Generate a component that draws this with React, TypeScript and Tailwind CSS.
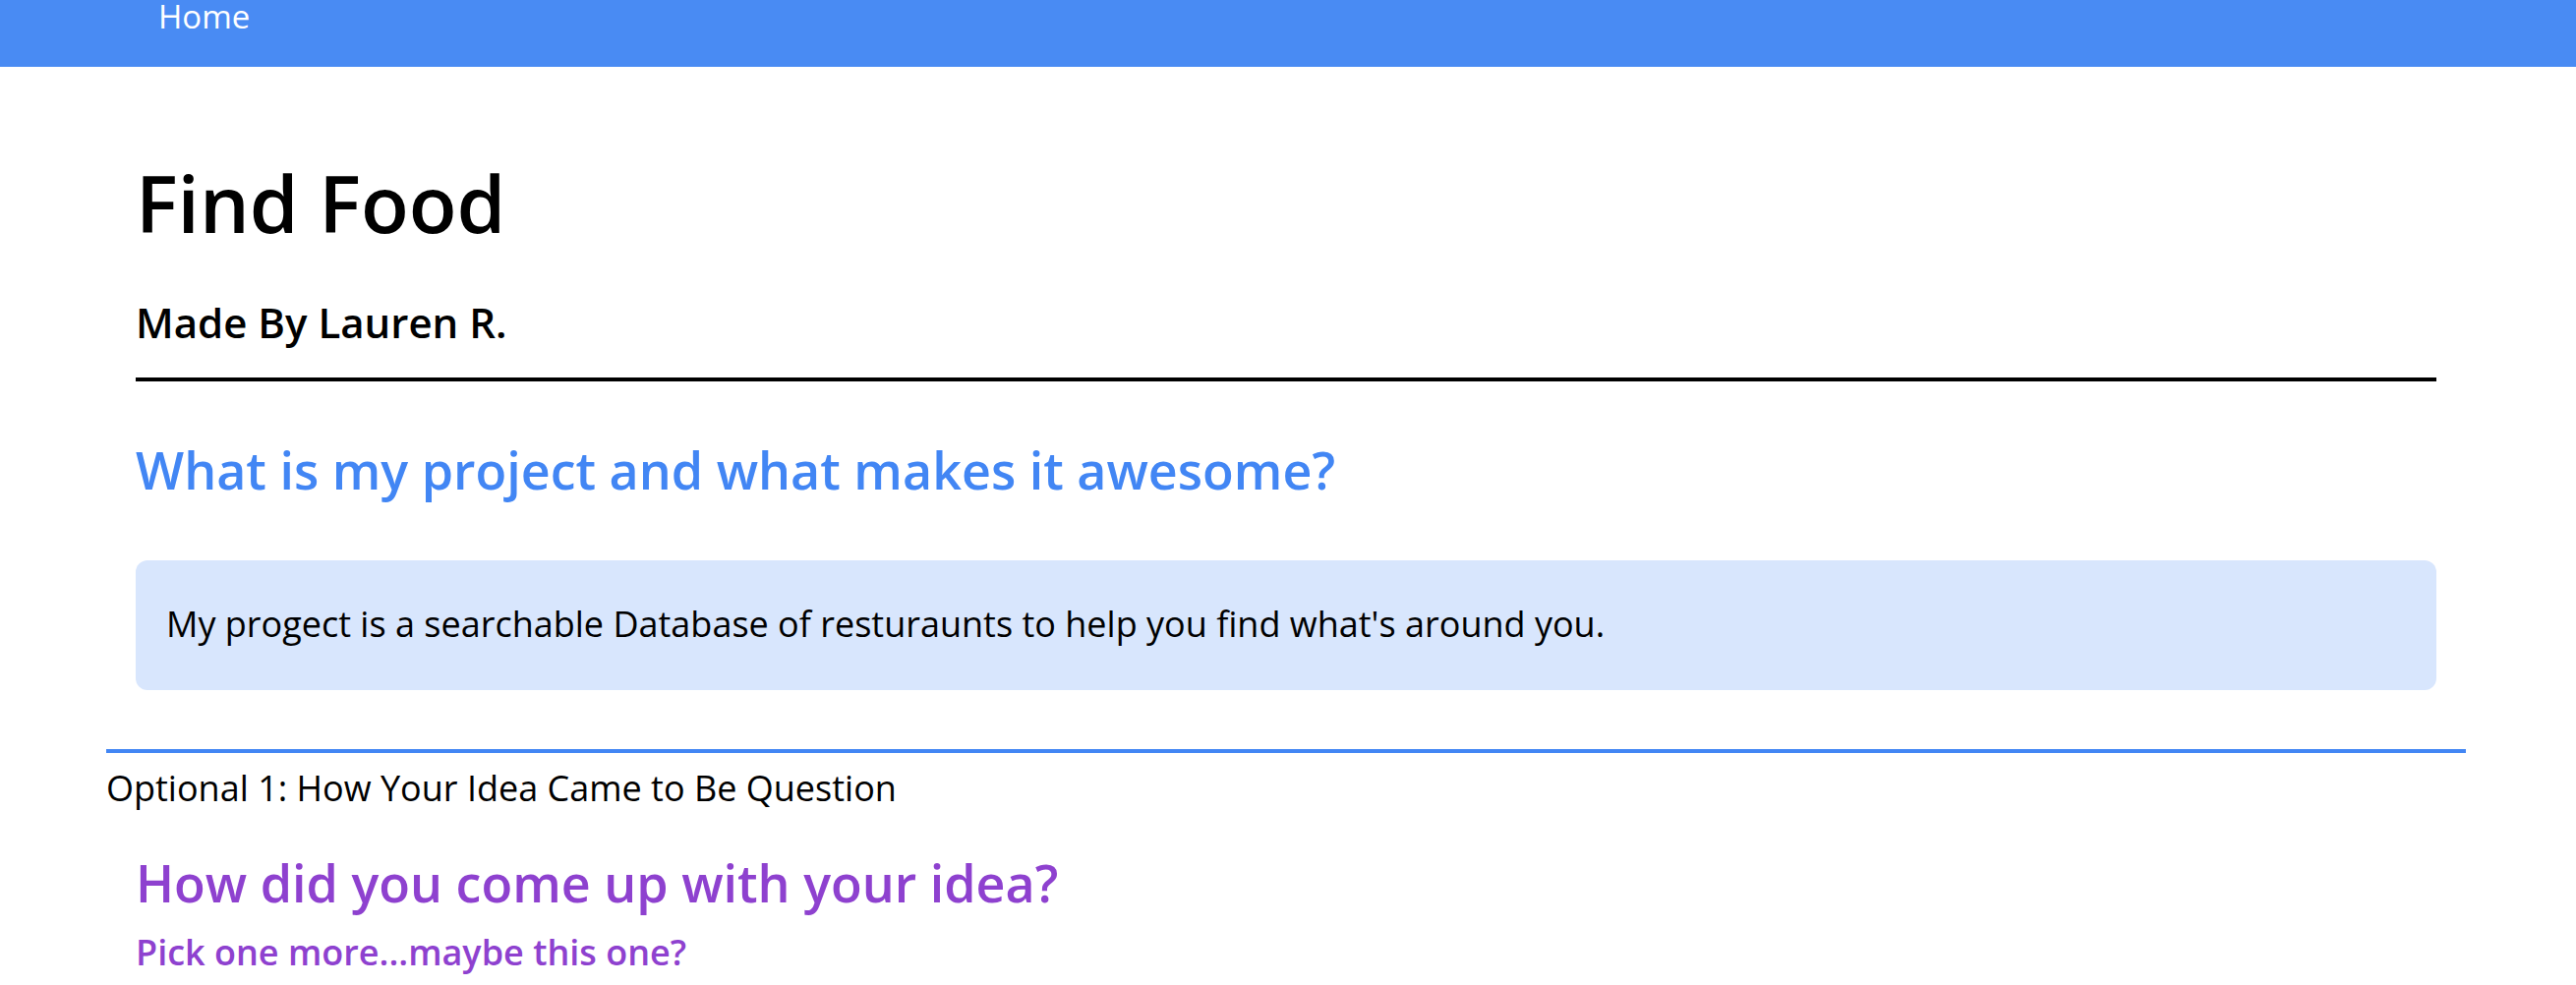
import React from 'react';

// Simple project showcase page
const Nav = () => (
  <nav className="h-[68px] bg-[#498bf3] pl-[161px]">
    <a className="block text-[33px] leading-none text-white w-fit">Home</a>
  </nav>
);

export default function App() {
  return (
    <div className="min-h-screen bg-white text-black font-['Open_Sans',sans-serif]">
      <Nav />
      <main className="ml-[108px] w-[2400px]">
        <section className="px-[30px]">
          <h1 className="mt-[98px] text-[80px] leading-none font-semibold">Find Food</h1>
          <h3 className="mt-[61px] text-[42px] leading-none font-semibold">Made By Lauren R.</h3>
          <hr className="mt-[35px] h-[4px] border-0 bg-black" />
          <h2 className="mt-[64px] text-[52px] leading-none font-semibold text-[#4286f4]">
            What is my project and what makes it awesome?
          </h2>
          <div className="mt-[66px] rounded-[12px] bg-[#d8e6fd] pl-[31px] pt-[47px] pb-[49px]">
            <p className="text-[36px] leading-none">
              My progect is a searchable Database of resturaunts to help you find what's around you.
            </p>
          </div>
        </section>
        <hr className="mt-[60px] h-[4px] border-0 bg-[#4286f4]" />
        <p className="mt-[18px] text-[36px] leading-none">Optional 1: How Your Idea Came to Be Question</p>
        <section className="px-[30px]">
          <h2 className="mt-[52px] text-[52px] leading-none font-semibold text-[#8e41cf]">
            How did you come up with your idea?
          </h2>
          <h4 className="mt-[27px] text-[36px] leading-none font-semibold text-[#8e41cf]">
            Pick one more...maybe this one?
          </h4>
        </section>
      </main>
    </div>
  );
}
